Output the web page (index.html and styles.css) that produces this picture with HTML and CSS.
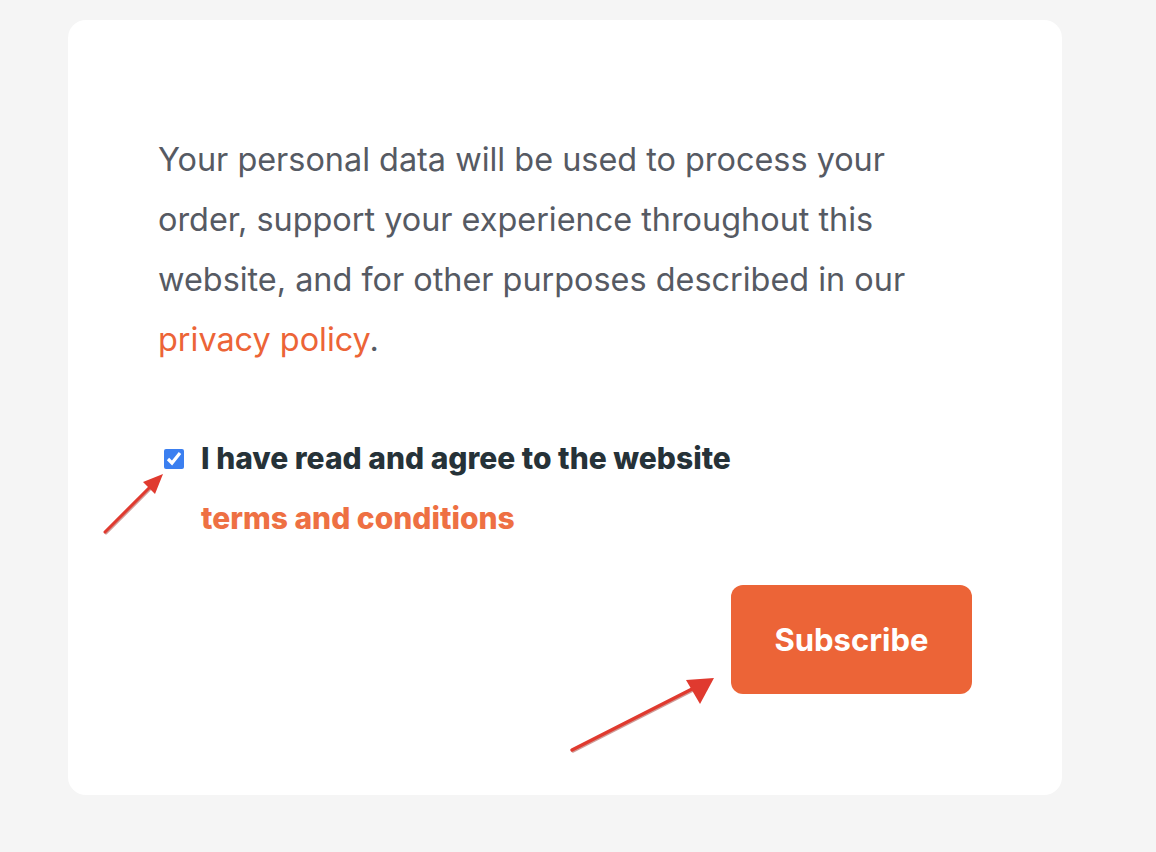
FILE: index.html
```html
<!DOCTYPE html>
<html lang="en">
<head>
  <meta charset="UTF-8">
  <title>Checkout consent</title>
  <link rel="stylesheet" href="styles.css">
</head>
<body>
  <div class="card">
    <p class="privacy-text">
      Your personal data will be used to process your order, support your experience throughout this website, and for other purposes described in our <a href="#" class="link">privacy policy</a>.
    </p>

    <div class="terms-row">
      <input type="checkbox" id="agree" class="terms-check" checked>
      <label for="agree" class="terms-label">
        I have read and agree to the website<br>
        <a href="#" class="terms-link">terms and conditions</a>
      </label>
    </div>

    <div class="actions">
      <button class="subscribe-btn">Subscribe</button>
    </div>

    <!-- annotation arrows -->
    <svg class="arrow arrow-check" width="70" height="70" viewBox="0 0 70 70">
      <line x1="6" y1="64" x2="52" y2="18" stroke="#a33a32" stroke-width="3" stroke-linecap="round" transform="translate(1,1)" opacity="0.5"/>
      <line x1="6" y1="64" x2="52" y2="18" stroke="#e03a2f" stroke-width="3" stroke-linecap="round"/>
      <polygon points="64,6 44,14 56,26" fill="#e03a2f"/>
    </svg>
    <svg class="arrow arrow-btn" width="160" height="90" viewBox="0 0 160 90">
      <line x1="6" y1="82" x2="128" y2="20" stroke="#a33a32" stroke-width="3.5" stroke-linecap="round" transform="translate(1,1)" opacity="0.5"/>
      <line x1="6" y1="82" x2="128" y2="20" stroke="#e03a2f" stroke-width="3.5" stroke-linecap="round"/>
      <polygon points="148,10 120,12 134,36" fill="#e03a2f"/>
    </svg>
  </div>
</body>
</html>
```

FILE: styles.css
```css
body {
  margin: 0;
  background: #f5f5f5;
  font-family: Inter, "Noto Sans", Arial, sans-serif;
  padding: 20px 68px;
}
.card {
  position: relative;
  width: 994px;
  box-sizing: border-box;
  background: #fff;
  border-radius: 18px;
  padding: 110px 90px 101px 90px;
}
.privacy-text {
  margin: 0;
  font-size: 32.4px;
  line-height: 60px;
  color: #565a63;
  width: 790px;
}
.link {
  color: #ec6437;
  text-decoration: none;
}
.terms-row {
  display: flex;
  align-items: flex-start;
  gap: 17px;
  margin-top: 58px;
  padding-left: 6px;
}
.terms-check {
  width: 20px;
  height: 20px;
  margin: 21px 0 0 0;
  accent-color: #3b7ff0;
}
.terms-label {
  font-size: 30px;
  font-weight: 800;
  line-height: 60px;
  color: #263238;
}
.terms-link {
  color: #ee7043;
  text-decoration: none;
}
.actions {
  display: flex;
  justify-content: flex-end;
  margin-top: 37px;
}
.subscribe-btn {
  width: 241px;
  height: 109px;
  border: none;
  border-radius: 12px;
  background: #ec6437;
  color: #fff;
  font-family: inherit;
  font-size: 31px;
  font-weight: 700;
  cursor: pointer;
}
.arrow {
  position: absolute;
}
.arrow-check {
  left: 31px;
  top: 448px;
}
.arrow-btn {
  left: 498px;
  top: 648px;
}
```
